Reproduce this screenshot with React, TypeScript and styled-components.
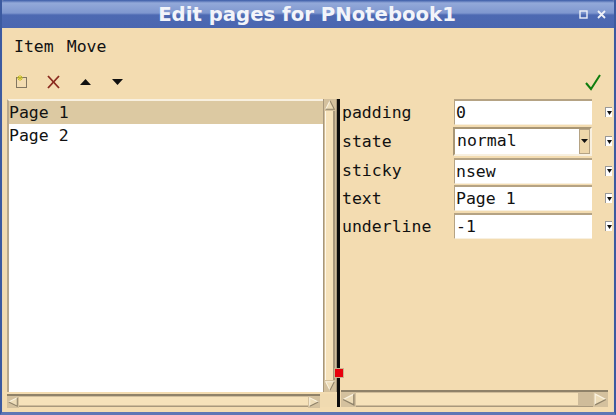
import styled, { createGlobalStyle } from 'styled-components';

const Global = createGlobalStyle`
  html, body { margin: 0; padding: 0; background: #f3dcb1; }
  * { box-sizing: border-box; }
`;

const mono = `"DejaVu Sans Mono", monospace`;

const Window = styled.div`
  width: 616px;
  height: 415px;
  display: flex;
  flex-direction: column;
  overflow: hidden;
  background: #f3dcb1;
  border-left: 2px solid #3c5aa0;
  border-right: 2px solid #3c5aa0;
  border-bottom: 3px solid #5f76b4;
`;

const TitleBar = styled.div`
  height: 28px;
  flex: none;
  margin: 0 -2px;
  position: relative;
  display: flex;
  align-items: center;
  justify-content: center;
  background: linear-gradient(#3a5aa6 0, #93a9d9 3px, #7f97cf 13px, #4d69b2 15px, #4a66b0 28px);
  border-top-left-radius: 4px;
  border-top-right-radius: 4px;
  color: #f2f4fa;
  font: bold 19.7px "DejaVu Sans", sans-serif;
  padding-right: 2px;
`;

const TitleButtons = styled.div`
  position: absolute;
  right: 10px;
  top: 10px;
  display: flex;
  align-items: center;
  gap: 9px;
`;

const Content = styled.div`
  flex: 1;
  min-height: 0;
  display: flex;
  flex-direction: column;
  border-left: 1px solid #ead9b8;
  border-right: 1px solid #ead9b8;
`;

const MenuBar = styled.div`
  height: 34px;
  flex: none;
  padding: 9px 0 0 11px;
  display: flex;
  gap: 13px;
  font: 16.5px ${mono};
  color: #111;
`;

const ToolBar = styled.div`
  height: 37px;
  flex: none;
  display: flex;
  align-items: center;
  padding: 3px 12px 0 11px;
`;

const ToolIcon = styled.span<{ $w: number }>`
  width: ${p => p.$w}px;
  display: flex;
  align-items: center;
`;

const Spacer = styled.div`
  flex: 1;
`;

const Panes = styled.div`
  flex: 1;
  min-height: 0;
  display: flex;
  position: relative;
  padding-bottom: 5px;
`;

const LeftPane = styled.div`
  width: 334px;
  flex: none;
  padding-left: 4px;
  display: flex;
  flex-direction: column;
`;

const ListArea = styled.div`
  flex: 1;
  min-height: 0;
  display: flex;
`;

const List = styled.div`
  flex: 1;
  background: #fff;
  border-top: 2px solid #f8f0e0;
  border-left: 2px solid #b8a88c;
  font: 16.5px/23px ${mono};
  color: #111;
`;

const ListItem = styled.div<{ $selected?: boolean }>`
  height: 23px;
  background: ${p => (p.$selected ? '#dcc9a2' : 'transparent')};
`;

const VScroll = styled.div`
  width: 14px;
  flex: none;
  display: flex;
  flex-direction: column;
  background: #cfbc9a;
  border-left: 1px solid #a8987c;
  border-right: 1px solid #a8987c;
`;

const VThumb = styled.div`
  flex: 1;
  margin: 0 1px;
  background: #f6e2ba;
  border-left: 1px solid #fff8e8;
  border-right: 2px solid #a8987c;
`;

const Arrow = styled.svg`
  display: block;
  flex: none;
`;

const HScroll = styled.div`
  flex: 1;
  height: 13px;
  margin-top: 2px;
  display: flex;
  align-items: stretch;
  background: #cfbc9a;
  border-top: 2px solid #8f8269;
  border-bottom: 1px solid #a8987c;
`;

const HThumb = styled.div<{ $trough?: number }>`
  flex: 1;
  margin: 1px ${p => p.$trough ?? 0}px 1px 0;
  background: #f6e2ba;
`;

const Corner = styled.div`
  width: 17px;
  flex: none;
  margin-top: 2px;
  background: #f0dab0;
`;

const BottomLeft = styled.div`
  display: flex;
  flex: none;
`;

const Sash = styled.div`
  width: 3px;
  flex: none;
  background: #0c0c0c;
`;

const SashHandle = styled.div`
  position: absolute;
  left: 331px;
  bottom: 34px;
  width: 10px;
  height: 10px;
  background: #e8000c;
  border: 1px solid #c9b48e;
`;

const RightPane = styled.div`
  flex: 1;
  min-width: 0;
  display: flex;
  flex-direction: column;
`;

const Props = styled.div`
  flex: 1;
  padding-left: 2px;
  display: flex;
  flex-direction: column;
  gap: 1.75px;
`;

const PropRow = styled.div`
  display: flex;
  align-items: center;
  font: 16.5px ${mono};
  color: #111;
`;

const PropName = styled.div`
  width: 112px;
  flex: none;
`;

const PropEntry = styled.div`
  width: 138px;
  height: 26px;
  flex: none;
  background: #fff;
  border-top: 2px solid #b5a384;
  border-left: 1px solid #b5a384;
  border-bottom: 1px solid #f8f0e0;
  padding-left: 1px;
  line-height: 23px;
`;

const PropCombo = styled.div`
  width: 139px;
  height: 29px;
  flex: none;
  margin-left: -1px;
  background: #fff;
  border-top: 2px solid #a89675;
  border-left: 2px solid #a89675;
  border-bottom: 2px solid #f8f0e0;
  border-right: 2px solid #f8f0e0;
  padding-left: 2px;
  display: flex;
  justify-content: space-between;
  line-height: 24px;
`;

const ComboButton = styled.div`
  width: 11px;
  background: #eed7ab;
  border: 1px solid #b5a384;
  display: flex;
  align-items: center;
  justify-content: center;
`;

const MenuBox = styled.div`
  width: 7px;
  height: 10px;
  margin-left: 13px;
  flex: none;
  background: #fff;
  border-top: 1px solid #999;
  border-left: 1px solid #999;
  display: flex;
  align-items: center;
  justify-content: center;
`;

const BottomRight = styled.div`
  height: 17px;
  flex: none;
  margin: 0 5px 0 1px;
  display: flex;
  background: #cfbc9a;
  border-top: 2px solid #8f8269;
  border-bottom: 1px solid #a8987c;
`;

const Triangle = ({ dir, size = 14 }: { dir: 'up' | 'down' | 'left' | 'right'; size?: number }) => {
  const shapes = {
    up: { fill: '7,2 12,12 2,12', lit: 'M2 12 L7 2', shade: 'M7 2 L12 12 L2 12' },
    down: { fill: '2,2 12,2 7,12', lit: 'M7 12 L2 2 L12 2', shade: 'M12 2 L7 12' },
    left: { fill: '2,7 12,2 12,12', lit: 'M12 2 L2 7', shade: 'M2 7 L12 12 L12 2' },
    right: { fill: '12,7 2,2 2,12', lit: 'M2 12 L2 2 L12 7', shade: 'M12 7 L2 12' },
  }[dir];
  return (
    <Arrow width={size} height={size} viewBox="0 0 14 14">
      <rect width="14" height="14" fill="#d4c19e" />
      <polygon points={shapes.fill} fill="#eddcb8" />
      <path d={shapes.lit} fill="none" stroke="#fbf3e0" strokeWidth="1.2" />
      <path d={shapes.shade} fill="none" stroke="#8f8269" strokeWidth="1.2" />
    </Arrow>
  );
};

const rows = [
  { name: 'padding', value: '0' },
  { name: 'state', value: 'normal', combo: true },
  { name: 'sticky', value: 'nsew' },
  { name: 'text', value: 'Page 1' },
  { name: 'underline', value: '-1' },
];

export default function App() {
  return (
    <Window>
      <Global />
      <TitleBar>
        Edit pages for PNotebook1
        <TitleButtons>
          <svg width="9" height="9" viewBox="0 0 9 9">
            <rect x="1" y="1" width="7" height="7" fill="none" stroke="#eef1f8" strokeWidth="1.4" />
          </svg>
          <svg width="9" height="9" viewBox="0 0 9 9">
            <path d="M1 1 L8 8 M8 1 L1 8" stroke="#eef1f8" strokeWidth="1.8" />
          </svg>
        </TitleButtons>
      </TitleBar>
      <Content>
        <MenuBar>
          <span>Item</span>
          <span>Move</span>
        </MenuBar>
        <ToolBar>
          <ToolIcon $w={32}>
            <svg width="14" height="14" viewBox="0 0 14 14">
              <rect x="2.5" y="2.5" width="10" height="10" fill="none" stroke="#111" strokeDasharray="1 1" />
              <path d="M6 0 L6 6 M3 3 L9 3 M4 1 L8 5 M8 1 L4 5" stroke="#c8c020" strokeWidth="1" />
            </svg>
          </ToolIcon>
          <ToolIcon $w={34}>
            <svg width="15" height="14" viewBox="0 0 15 14">
              <path d="M2 1 L13 13" stroke="#8a2a1e" strokeWidth="1.8" />
              <path d="M13 1 L2 13" stroke="#8a2a1e" strokeWidth="1.8" />
            </svg>
          </ToolIcon>
          <ToolIcon $w={32}>
            <svg width="11" height="6" viewBox="0 0 11 6">
              <polygon points="5.5,0 11,6 0,6" fill="#111" />
            </svg>
          </ToolIcon>
          <ToolIcon $w={12}>
            <svg width="11" height="6" viewBox="0 0 11 6">
              <polygon points="0,0 11,0 5.5,6" fill="#111" />
            </svg>
          </ToolIcon>
          <Spacer />
          <svg width="16" height="17" viewBox="0 0 16 17">
            <path d="M1 9 L6 15 L15 1" fill="none" stroke="#0f7d0f" strokeWidth="2" />
          </svg>
        </ToolBar>
        <Panes>
          <LeftPane>
            <ListArea>
              <List>
                <ListItem $selected>Page 1</ListItem>
                <ListItem>Page 2</ListItem>
              </List>
              <VScroll>
                <Triangle dir="up" size={12} />
                <VThumb />
                <Triangle dir="down" size={12} />
              </VScroll>
            </ListArea>
            <BottomLeft>
              <HScroll>
                <Triangle dir="left" size={12} />
                <HThumb />
                <Triangle dir="right" size={12} />
              </HScroll>
              <Corner />
            </BottomLeft>
          </LeftPane>
          <Sash />
          <RightPane>
            <Props>
              {rows.map(r => (
                <PropRow key={r.name}>
                  <PropName>{r.name}</PropName>
                  {r.combo ? (
                    <PropCombo>
                      {r.value}
                      <ComboButton>
                        <svg width="7" height="4" viewBox="0 0 7 4">
                          <polygon points="0,0 7,0 3.5,4" fill="#111" />
                        </svg>
                      </ComboButton>
                    </PropCombo>
                  ) : (
                    <PropEntry>{r.value}</PropEntry>
                  )}
                  <MenuBox>
                    <svg width="5" height="4" viewBox="0 0 5 4">
                      <polygon points="0,0 5,0 2.5,4" fill="#111" />
                    </svg>
                  </MenuBox>
                </PropRow>
              ))}
            </Props>
            <BottomRight>
              <Triangle dir="left" size={15} />
              <HThumb $trough={15} />
              <Triangle dir="right" size={15} />
            </BottomRight>
          </RightPane>
          <SashHandle />
        </Panes>
      </Content>
    </Window>
  );
}
